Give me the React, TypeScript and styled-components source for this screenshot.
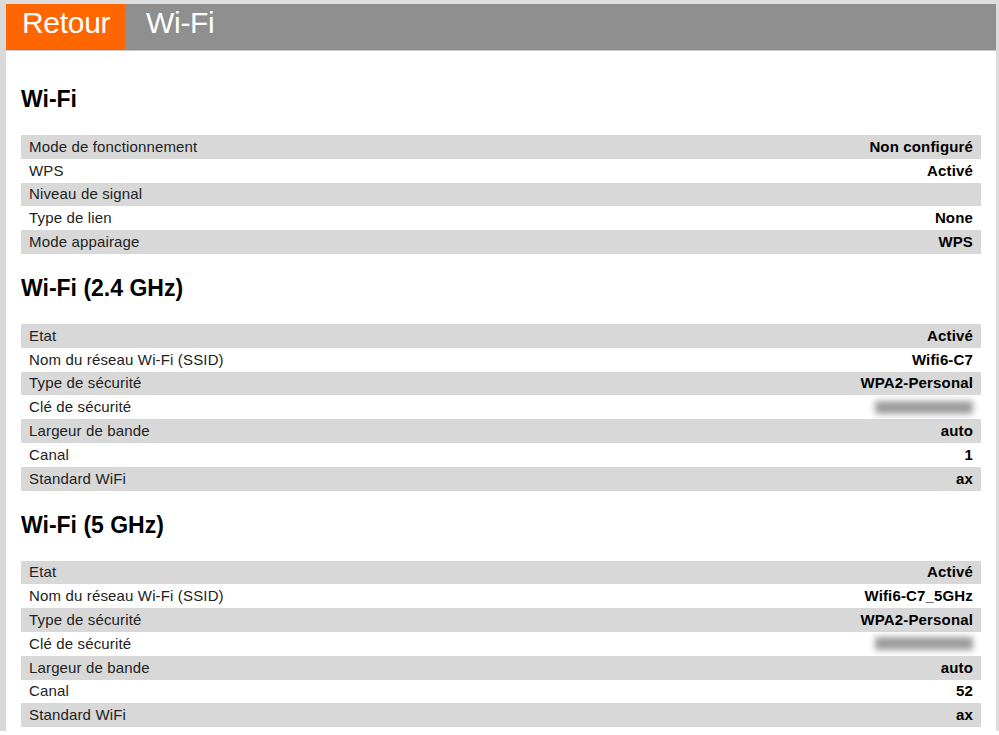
import React from "react";
import styled, { createGlobalStyle } from "styled-components";

const Global = createGlobalStyle`
  html, body { margin: 0; padding: 0; background: #ffffff; }
  body { font-family: "Liberation Sans", Arial, Helvetica, sans-serif; }
`;

const Frame = styled.div`
  border-top: 4px solid #dedede;
  border-left: 6px solid #d9d9d9;
  border-right: 3px solid #dcdcdc;
  min-height: 731px;
  box-sizing: border-box;
  background: #ffffff;
`;

const TopBar = styled.header`
  display: flex;
  align-items: stretch;
  height: 46px;
  background: #8f8f8f;
  border-bottom: 1px solid #c8c8c8;
`;

const BackButton = styled.a`
  display: flex;
  align-items: center;
  padding: 0 15px 8px 16px;
  width: 88px;
  background: #ff6600;
  color: #ffffff;
  font-size: 30px;
  font-weight: 300;
  text-decoration: none;
  letter-spacing: -0.3px;
`;

const PageTitle = styled.h1`
  display: flex;
  align-items: center;
  margin: 0 0 8px 21px;
  color: #ffffff;
  font-size: 30px;
  font-weight: 300;
  letter-spacing: -0.3px;
`;

const Content = styled.main`
  padding: 0 15px 0 15px;
`;

const Section = styled.section<{ $first?: boolean }>`
  margin-top: ${(p) => (p.$first ? "35px" : "21px")};
`;

const Heading = styled.h2`
  margin: 0 0 23px 0;
  font-size: 23px;
  line-height: 26px;
  font-weight: bold;
  color: #000000;
`;

const Table = styled.div`
  display: flex;
  flex-direction: column;
`;

const Row = styled.div<{ $shade: boolean }>`
  display: flex;
  align-items: center;
  justify-content: space-between;
  height: 23.8px;
  padding: 0 8px;
  background: ${(p) => (p.$shade ? "#d8d8d8" : "#ffffff")};
  font-size: 15px;
  line-height: 18px;
`;

const Label = styled.span`
  color: #222222;
  letter-spacing: 0.15px;
`;

const Value = styled.span`
  color: #000000;
  font-weight: bold;
  letter-spacing: 0.15px;
`;

const Blurred = styled.span`
  display: inline-block;
  width: 98px;
  height: 13px;
  background: #9c9c9c;
  filter: blur(3px);
  margin-right: 0px;
`;

type Item = { label: string; value?: string; hidden?: boolean };

const sections: { title: string; items: Item[] }[] = [
  {
    title: "Wi-Fi",
    items: [
      { label: "Mode de fonctionnement", value: "Non configuré" },
      { label: "WPS", value: "Activé" },
      { label: "Niveau de signal", value: "" },
      { label: "Type de lien", value: "None" },
      { label: "Mode appairage", value: "WPS" },
    ],
  },
  {
    title: "Wi-Fi (2.4 GHz)",
    items: [
      { label: "Etat", value: "Activé" },
      { label: "Nom du réseau Wi-Fi (SSID)", value: "Wifi6-C7" },
      { label: "Type de sécurité", value: "WPA2-Personal" },
      { label: "Clé de sécurité", hidden: true },
      { label: "Largeur de bande", value: "auto" },
      { label: "Canal", value: "1" },
      { label: "Standard WiFi", value: "ax" },
    ],
  },
  {
    title: "Wi-Fi (5 GHz)",
    items: [
      { label: "Etat", value: "Activé" },
      { label: "Nom du réseau Wi-Fi (SSID)", value: "Wifi6-C7_5GHz" },
      { label: "Type de sécurité", value: "WPA2-Personal" },
      { label: "Clé de sécurité", hidden: true },
      { label: "Largeur de bande", value: "auto" },
      { label: "Canal", value: "52" },
      { label: "Standard WiFi", value: "ax" },
    ],
  },
];

export default function App() {
  return (
    <>
      <Global />
      <Frame>
        <TopBar>
          <BackButton href="#">Retour</BackButton>
          <PageTitle>Wi-Fi</PageTitle>
        </TopBar>
        <Content>
          {sections.map((s, si) => (
            <Section key={s.title} $first={si === 0}>
              <Heading>{s.title}</Heading>
              <Table>
                {s.items.map((it, i) => (
                  <Row key={it.label} $shade={i % 2 === 0}>
                    <Label>{it.label}</Label>
                    {it.hidden ? <Blurred aria-label="masqué" /> : <Value>{it.value}</Value>}
                  </Row>
                ))}
              </Table>
            </Section>
          ))}
        </Content>
      </Frame>
    </>
  );
}
